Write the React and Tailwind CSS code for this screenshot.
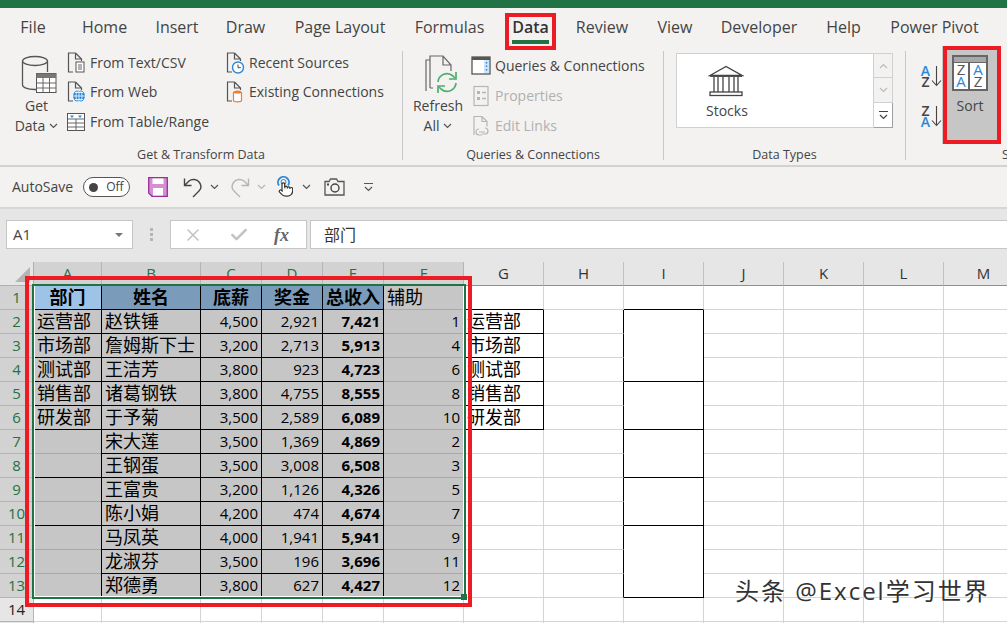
import { Check, X } from "lucide-react";

const uiFont = "font-['Open_Sans','Noto_Sans_CJK_SC',sans-serif]";

const tabs = [
  ["File", "w-[62px]"],
  ["Home", "w-[81px]"],
  ["Insert", "w-[64px]"],
  ["Draw", "w-[73px]"],
  ["Page Layout", "w-[116px]"],
  ["Formulas", "w-[103px]"],
  ["Data", "w-[59px]"],
  ["Review", "w-[84px]"],
  ["View", "w-[62px]"],
  ["Developer", "w-[106px]"],
  ["Help", "w-[63px]"],
  ["Power Pivot", "w-[119px]"],
];

const colLetters = ["A", "B", "C", "D", "E", "F", "G", "H", "I", "J", "K", "L", "M"];

const rows = [
  ["运营部", "赵铁锤", "4,500", "2,921", "7,421", "1", "运营部"],
  ["市场部", "詹姆斯下士", "3,200", "2,713", "5,913", "4", "市场部"],
  ["测试部", "王洁芳", "3,800", "923", "4,723", "6", "测试部"],
  ["销售部", "诸葛钢铁", "3,800", "4,755", "8,555", "8", "销售部"],
  ["研发部", "于予菊", "3,500", "2,589", "6,089", "10", "研发部"],
  ["", "宋大莲", "3,500", "1,369", "4,869", "2", ""],
  ["", "王钢蛋", "3,500", "3,008", "6,508", "3", ""],
  ["", "王富贵", "3,200", "1,126", "4,326", "5", ""],
  ["", "陈小娟", "4,200", "474", "4,674", "7", ""],
  ["", "马凤英", "4,000", "1,941", "5,941", "9", ""],
  ["", "龙淑芬", "3,500", "196", "3,696", "11", ""],
  ["", "郑德勇", "3,800", "627", "4,427", "12", ""],
];

// rows (1-based sheet numbers) where column A / I has a black line under it
const blockEnds = [1, 2, 3, 4, 5, 6, 8, 10, 13];
const mergedEnds = [4, 6, 8, 10, 13];

const Chevron = ({ color = "#555" }) => (
  <svg width="9" height="6" viewBox="0 0 9 6" className="shrink-0">
    <path d="M1 1l3.5 3.5L8 1" fill="none" stroke={color} strokeWidth="1.2" />
  </svg>
);

const GetDataIcon = () => (
  <svg width="36" height="38" viewBox="0 0 36 38" className="ml-[5px]">
    <path d="M1.5 6v24c0 2.5 5 4.5 12 4.5h2M26.5 6v11" fill="none" stroke="#555" strokeWidth="1.3" />
    <ellipse cx="14" cy="6" rx="12.5" ry="4.5" fill="#f3f2f1" stroke="#555" strokeWidth="1.3" />
    <rect x="15.5" y="18.5" width="19.5" height="19" fill="#fff" stroke="#555" />
    <rect x="15.5" y="18.5" width="19.5" height="4.5" fill="#777" />
    <path d="M22 23v14M28.5 23v14M16 28h19M16 33h19" stroke="#666" />
  </svg>
);

const Doc = ({ children, color = "#555" }) => (
  <svg width="20" height="22" viewBox="0 0 20 22" className="shrink-0">
    <path d="M9.5 1H2.5v19H7M9.5 1l6 6v2M9.5 1v6h6" fill="none" stroke={color} strokeWidth="1.2" />
    {children}
  </svg>
);

const TextDocIcon = () => (
  <Doc>
    <rect x="10" y="10" width="8" height="10" fill="#fff" stroke="#555" />
    <path d="M12 13h4M12 15h4M12 17h4" stroke="#666" />
  </Doc>
);

const WebDocIcon = () => (
  <Doc>
    <circle cx="13" cy="15" r="6" fill="#2b88d8" />
    <path d="M7 15h12M13 9v12M9 11.5h8M9 18.5h8" stroke="#fff" strokeWidth="0.8" />
    <ellipse cx="13" cy="15" rx="3" ry="6" fill="none" stroke="#fff" strokeWidth="0.8" />
  </Doc>
);

const RecentIcon = () => (
  <Doc>
    <circle cx="13" cy="15.5" r="5.5" fill="#fff" stroke="#2b88d8" strokeWidth="1.4" />
    <path d="M13 12.5v3.2h2.8" fill="none" stroke="#444" />
  </Doc>
);

const ExistingIcon = () => (
  <Doc>
    <path d="M8.5 11v8.5c0 .8 2 1.3 4 1.3s4-.5 4-1.3V11" fill="#fff" stroke="#ed7d31" strokeWidth="1.2" />
    <ellipse cx="12.5" cy="11" rx="4" ry="1.6" fill="#ed7d31" />
  </Doc>
);

const TableIcon = () => (
  <svg width="20" height="20" viewBox="0 0 20 20" className="shrink-0">
    <rect x="1.5" y="1.5" width="17" height="17" fill="#fff" stroke="#555" />
    <path d="M2 7h17M2 11h17M2 15h17M10 7v12" stroke="#666" />
    <path d="M4 3.5h4L6 6zM12 3.5h4L14 6z" fill="#2b88d8" />
  </svg>
);

const RefreshIcon = () => (
  <svg width="38" height="40" viewBox="0 0 38 40" className="ml-[8px]">
    <path d="M3 36V5h4" fill="none" stroke="#666" strokeWidth="1.2" />
    <path d="M7 33V1h13l8 9v6M20 1v9h8M7 33h3" fill="none" stroke="#666" strokeWidth="1.2" />
    <path d="M15 27a9 9 0 0 1 15-6l2 2M33 28a9 9 0 0 1-15 6l-2-2" fill="none" stroke="#4caf6e" strokeWidth="1.7" />
    <path d="M33 17v7h-7M15 38v-7h7" fill="none" stroke="#4caf6e" strokeWidth="1.7" />
  </svg>
);

const QueriesIcon = () => (
  <svg width="20" height="19" viewBox="0 0 20 19" className="shrink-0">
    <rect x="1" y="1" width="18" height="17" fill="#fff" stroke="#555" strokeWidth="1.3" />
    <rect x="1" y="1" width="18" height="3" fill="#555" />
    <rect x="13" y="4" width="5" height="13" fill="#cfe4f6" />
    <path d="M15.5 6v1.5M15.5 9.5v1.5M15.5 13v1.5" stroke="#2b88d8" strokeWidth="1.5" />
  </svg>
);

const PropertiesIcon = () => (
  <svg width="20" height="22" viewBox="0 0 20 22" className="shrink-0">
    <rect x="3" y="1.5" width="14" height="19" fill="none" stroke="#b5b5b5" strokeWidth="1.2" />
    <path d="M6 6h3v3H6zM6 12h3v3H6z" fill="#b5b5b5" />
    <path d="M11 7.5h4M11 13.5h4" stroke="#b5b5b5" strokeWidth="1.4" />
  </svg>
);

const EditLinksIcon = () => (
  <svg width="20" height="22" viewBox="0 0 20 22" className="shrink-0">
    <path d="M3 20V1.5h8l5 5v5M11 1.5v5h5" fill="none" stroke="#b5b5b5" strokeWidth="1.2" />
    <path d="M8 14a3 3 0 1 0 0 6h3M14 13a3 3 0 1 1 0 6h-3M8 17h6" fill="none" stroke="#b5b5b5" strokeWidth="1.2" />
  </svg>
);

const BankIcon = () => (
  <svg width="36" height="32" viewBox="0 0 36 32">
    <path d="M2 10.5L18 1.5l16 9z" fill="none" stroke="#444" strokeWidth="1.4" />
    <path d="M2 11h32" stroke="#444" strokeWidth="1.8" />
    <path d="M6 12v15M10 12v15M15 12v15M21 12v15M26 12v15M30 12v15" stroke="#444" strokeWidth="1.3" />
    <rect x="2" y="27" width="32" height="3.5" fill="none" stroke="#444" strokeWidth="1.3" />
  </svg>
);

const SortSmall = ({ top, bottom, topClass, bottomClass }) => (
  <div className="flex h-[22px] w-[22px] items-stretch">
    <div className="flex w-[11px] flex-col items-center text-[14px] leading-[11px] font-semibold">
      <span className={topClass}>{top}</span>
      <span className={bottomClass}>{bottom}</span>
    </div>
    <svg width="11" height="22" viewBox="0 0 11 22">
      <path d="M5.500 1v19M1 15.500l4.500 5 4.500-5" fill="none" stroke="#444" strokeWidth="1.1" />
    </svg>
  </div>
);

const SortIcon = () => (
  <div className="grid h-[36px] w-[36px] grid-cols-2 grid-rows-[6px_1fr] border-2 border-[#666] bg-white">
    <div className="col-span-2 border-b border-[#666] bg-[#a8a8a8]" />
    <div className="flex flex-col items-center border-r-2 border-[#666] text-[15px] leading-[12px]">
      <span className="text-[#555]">Z</span>
      <span className="text-[#2b88d8]">A</span>
    </div>
    <div className="flex flex-col items-center text-[15px] leading-[12px]">
      <span className="text-[#2b88d8]">A</span>
      <span className="text-[#555]">Z</span>
    </div>
  </div>
);

const SaveIcon = () => (
  <svg width="20" height="20" viewBox="0 0 20 20">
    <path d="M.7.7h18.6v18.6H4L.7 16z" fill="#d58fd5" stroke="#9a2f9a" strokeWidth="1.3" />
    <rect x="4.5" y="1.5" width="11" height="5.5" fill="#fff" />
    <rect x="5" y="11" width="10" height="7.5" fill="#fff" />
  </svg>
);

const UndoIcon = ({ color }) => (
  <svg width="20" height="22" viewBox="0 0 20 22">
    <path d="M1.5 2.5v7h7M2 9l4-4c3-2.500 8-2 10.500 1.500 2 3 1.500 6.500-.500 8.500L10 21" fill="none" stroke={color} strokeWidth="1.4" />
  </svg>
);

const TouchIcon = () => (
  <svg width="16" height="22" viewBox="0 0 16 22">
    <path d="M2 9.500a5.500 5.500 0 1 1 9 0" fill="none" stroke="#2b88d8" strokeWidth="1.8" />
    <circle cx="6.500" cy="6" r="2.500" fill="none" stroke="#2b88d8" strokeWidth="1" />
    <svg x="1" y="5" width="16" height="17" viewBox="0 0 24 24" fill="#fff" stroke="#333" strokeWidth="1.8">
      <path d="M18 11v-1a2 2 0 0 0-2-2a2 2 0 0 0-2 2" />
      <path d="M14 10V9a2 2 0 0 0-2-2a2 2 0 0 0-2 2v1" />
      <path d="M10 9.500V4a2 2 0 0 0-2-2a2 2 0 0 0-2 2v10" />
      <path d="M18 11a2 2 0 1 1 4 0v3a8 8 0 0 1-8 8h-2c-2.800 0-4.500-.860-5.990-2.340l-3.600-3.600a2 2 0 0 1 2.830-2.820L7 15" />
    </svg>
  </svg>
);

const CameraIcon = () => (
  <svg width="21" height="18" viewBox="0 0 21 18">
    <path d="M1 3.500h4l1.500-2.500h6L14 3.500h6V17H1z" fill="none" stroke="#555" strokeWidth="1.3" />
    <circle cx="11" cy="10" r="4" fill="none" stroke="#444" strokeWidth="1.4" />
    <rect x="3" y="5.500" width="2" height="2" fill="#444" />
  </svg>
);

const SmallAction = ({ icon, label, disabled }) => (
  <div className="flex h-[29.5px] items-center">
    <div className="flex w-[24px] shrink-0 justify-start">{icon}</div>
    <span className={disabled ? "text-[14px] leading-none text-[#b0b0b0]" : "text-[14px] leading-none text-[#444]"}>
      {label}
    </span>
  </div>
);

const GroupLabel = ({ children }) => (
  <div className="flex h-[18px] shrink-0 items-center justify-center text-[12.5px] leading-none text-[#444]">{children}</div>
);

const SheetCell = ({ row, col }) => {
  const left = "flex items-center justify-start overflow-hidden whitespace-nowrap pl-[3px] text-[18px] text-black";
  const right = "flex items-center justify-end pr-[3px] text-[15px] text-black";
  const data = row >= 2 && row <= 13 ? rows[row - 2] : null;

  // selected table, A to F
  if (row === 1 && col === 0)
    return <div className="flex items-center justify-center border-r border-b border-black bg-[#9dc3e6] text-[18px] font-bold text-black">部门</div>;
  if (row === 1 && col >= 1 && col <= 4)
    return (
      <div className="flex items-center justify-center border-r border-b border-black bg-[#7a9cba] text-[18px] font-bold text-black">
        {["", "姓名", "底薪", "奖金", "总收入"][col]}
      </div>
    );
  if (row === 1 && col === 5)
    return <div className={`${left} border-b border-[#a9a9a9] bg-[#c6c6c6]`}>辅助</div>;
  if (data && col === 0)
    return (
      <div className={`${left} border-r border-black bg-[#c6c6c6] ${blockEnds.includes(row) ? "border-b" : "border-b-0 shadow-[inset_0_-1px_0_#a9a9a9]"}`}>
        {data[0]}
      </div>
    );
  if (data && col === 1)
    return <div className={`${left} border-r border-b border-black bg-[#c6c6c6]`}>{data[1]}</div>;
  if (data && (col === 2 || col === 3))
    return <div className={`${right} border-r border-b border-black bg-[#c6c6c6]`}>{data[col]}</div>;
  if (data && col === 4)
    return <div className={`${right} border-r border-b border-black bg-[#c6c6c6] font-bold`}>{data[4]}</div>;
  if (data && col === 5)
    return <div className={`${right} border-b border-[#a9a9a9] bg-[#c6c6c6] pr-[4px]`}>{data[5]}</div>;

  // helper list in G
  if (row >= 2 && row <= 6 && col === 6)
    return <div className={`${left} border-r border-b border-black bg-white`}>{data[6]}</div>;
  if (row === 1 && (col === 6 || col === 8))
    return <div className="border-r border-b border-r-[#d4d4d4] border-b-black bg-white" />;

  // merged boxes in I
  if (row >= 2 && row <= 13 && col === 7)
    return <div className="border-r border-b border-r-black border-b-[#d4d4d4] bg-white" />;
  if (row >= 2 && row <= 13 && col === 8)
    return <div className={mergedEnds.includes(row) ? "border-r border-b border-black bg-white" : "border-r border-black bg-white"} />;

  return <div className="border-r border-b border-[#d4d4d4] bg-white" />;
};

export default function App() {
  return (
    <div className={`relative h-[623px] w-[1007px] overflow-hidden bg-white ${uiFont}`}>
      <div className="h-2 bg-[#217346]" />

      {/* tabs */}
      <div className="flex h-[42px] items-start bg-[#f3f2f1] pl-[2px]">
        {tabs.map(([name, width]) =>
          name === "Data" ? (
            <div key={name} className={`relative flex h-[42px] flex-col items-center ${width}`}>
              <span className="mt-[8px] text-[16px] leading-[22px] font-semibold text-[#333]">{name}</span>
              <div className="absolute top-[32px] h-1 w-[37px] bg-[#217346]" />
            </div>
          ) : (
            <span key={name} className={`mt-[8px] text-center text-[16px] leading-[22px] text-[#444] ${width}`}>
              {name}
            </span>
          )
        )}
      </div>

      {/* ribbon */}
      <div className="flex h-[117px] border-b-2 border-[#d2d2d2] bg-[#f3f2f1] pt-[1px]">
        <div className="flex h-[109px] w-[403px] shrink-0 flex-col border-r border-[#c8c8c8]">
          <div className="flex h-[95px] shrink-0 pl-[7px]">
            <div className="flex w-[59px] shrink-0 flex-col items-center pt-[4px] text-[14px] leading-[20px] text-[#444]">
              <GetDataIcon />
              <span className="mt-[3px]">Get</span>
              <span className="flex items-center gap-[4px]">Data <Chevron /></span>
            </div>
            <div className="-mt-[3px] w-[159px] shrink-0">
              <SmallAction icon={<TextDocIcon />} label="From Text/CSV" />
              <SmallAction icon={<WebDocIcon />} label="From Web" />
              <SmallAction icon={<TableIcon />} label="From Table/Range" />
            </div>
            <div className="-mt-[3px]">
              <SmallAction icon={<RecentIcon />} label="Recent Sources" />
              <SmallAction icon={<ExistingIcon />} label="Existing Connections" />
            </div>
          </div>
          <GroupLabel>Get &amp; Transform Data</GroupLabel>
        </div>

        <div className="flex h-[109px] w-[261px] shrink-0 flex-col border-r border-[#c8c8c8]">
          <div className="flex h-[95px] shrink-0">
            <div className="flex w-[67px] shrink-0 flex-col items-center pt-[4px] pl-[3px] text-[14px] leading-[20px] text-[#444]">
              <RefreshIcon />
              <span className="mt-[1px]">Refresh</span>
              <span className="flex items-center gap-[4px]">All <Chevron /></span>
            </div>
            <div className="flex flex-col gap-[0.5px] pl-[1px]">
              <SmallAction icon={<QueriesIcon />} label="Queries & Connections" />
              <SmallAction icon={<PropertiesIcon />} label="Properties" disabled />
              <SmallAction icon={<EditLinksIcon />} label="Edit Links" disabled />
            </div>
          </div>
          <GroupLabel>Queries &amp; Connections</GroupLabel>
        </div>

        <div className="flex h-[109px] w-[242px] shrink-0 flex-col border-r border-[#c8c8c8]">
          <div className="flex h-[95px] shrink-0 items-start pt-[2px] pl-[12px]">
            <div className="flex h-[75px] w-[198px] flex-col border border-[#d0d0d0] bg-white pt-[11px] pl-[31px]">
              <BankIcon />
              <span className="mt-[5px] -ml-[2px] text-[14px] leading-[18px] text-[#444]">Stocks</span>
            </div>
            <div className="flex h-[75px] w-[19px] flex-col">
              <div className="flex h-[25px] items-center justify-center border border-l-0 border-[#d0d0d0]"><svg width="9" height="6" viewBox="0 0 9 6"><path d="M1 5l3.500-3.500L8 5" fill="none" stroke="#bbb" strokeWidth="1.200" /></svg></div>
              <div className="flex h-[25px] items-center justify-center border-r border-b border-[#d0d0d0]"><Chevron color="#bbb" /></div>
              <div className="flex h-[25px] flex-col items-center justify-center gap-[2px] border-r border-b border-[#a0a0a0] bg-white">
                <div className="h-px w-[9px] bg-[#444]" />
                <Chevron color="#444" />
              </div>
            </div>
          </div>
          <GroupLabel>Data Types</GroupLabel>
        </div>

        <div className="flex h-[109px] flex-1 flex-col">
          <div className="flex h-[95px] shrink-0 pl-[14px]">
            <div className="flex w-[22px] shrink-0 flex-col gap-[18px] pt-[14px]">
              <SortSmall top="A" bottom="Z" topClass="text-[#2b88d8]" bottomClass="text-[#444]" />
              <SortSmall top="Z" bottom="A" topClass="text-[#444]" bottomClass="text-[#2b88d8]" />
            </div>
            <div className="-mt-[5px] flex h-[98px] w-[56px] shrink-0 flex-col items-center bg-[#c6c6c6] pt-[9px]">
              <SortIcon />
              <span className="mt-[5px] text-[14px] leading-[20px] text-[#444]">Sort</span>
            </div>
          </div>
          <div className="shrink-0 whitespace-nowrap pl-[96px] text-[12.5px] leading-[18px] text-[#444]">Sort &amp; Filter</div>
        </div>
      </div>

      {/* quick access toolbar */}
      <div className="flex h-[42px] items-center border-b-2 border-[#d6d6d6] bg-[#f3f2f1] pl-[12px] text-[#444]">
        <span className="text-[14px] leading-none">AutoSave</span>
        <div className="ml-[10px] flex h-[20px] w-[47px] items-center rounded-full border border-[#555] bg-white pl-[5px]">
          <div className="h-[9px] w-[9px] rounded-full bg-[#444]" />
          <span className="ml-[8px] text-[12px] leading-none">Off</span>
        </div>
        <div className="ml-[18px]"><SaveIcon /></div>
        <div className="ml-[15px]"><UndoIcon color="#444" /></div>
        <div className="ml-[7px]"><Chevron /></div>
        <div className="ml-[11px] -scale-x-100"><UndoIcon color="#b5b5b5" /></div>
        <div className="ml-[7px]"><Chevron color="#b5b5b5" /></div>
        <div className="ml-[11px]"><TouchIcon /></div>
        <div className="ml-[9px]"><Chevron /></div>
        <div className="ml-[13px]"><CameraIcon /></div>
        <div className="ml-[19px] flex flex-col items-center gap-[2px]">
          <div className="h-px w-[9px] bg-[#555]" />
          <Chevron />
        </div>
      </div>

      {/* formula bar */}
      <div className="flex h-[53px] items-start bg-[#e6e6e6] pt-[11px] pl-[6px]">
        <div className="flex h-[29px] w-[127px] items-center justify-between border border-[#c6c6c6] bg-white pr-[9px] pl-[6px]">
          <span className="text-[15px] leading-none text-[#444]">A1</span>
          <div className="h-0 w-0 border-x-[4px] border-t-[4px] border-x-transparent border-t-[#777]" />
        </div>
        <div className="ml-[16px] flex h-[29px] w-[5px] flex-col items-center justify-center gap-[2px]">
          <div className="h-[3px] w-[3px] bg-[#b5b5b5]" />
          <div className="h-[3px] w-[3px] bg-[#b5b5b5]" />
          <div className="h-[3px] w-[3px] bg-[#b5b5b5]" />
        </div>
        <div className="ml-[16px] flex h-[29px] w-[137px] items-center border border-[#c6c6c6] bg-white pl-[12px]">
          <X size={20} strokeWidth={2} className="text-[#c4c4c4]" />
          <Check size={20} strokeWidth={3} className="ml-[26px] text-[#c4c4c4]" />
          <span className="ml-[25px] font-['Liberation_Serif',serif] text-[18px] leading-none font-bold text-[#666] italic">fx</span>
        </div>
        <div className="ml-[3px] flex h-[29px] flex-1 items-center border border-r-0 border-[#c6c6c6] bg-white pl-[13px] text-[16px] leading-none text-[#333]">
          部门
        </div>
      </div>

      {/* sheet */}
      <div className="grid grid-cols-[34px_68px_99px_61px_61px_61px_80px_80px_80px_80px_80px_80px_80px_80px] grid-rows-[24px_repeat(15,24px)]">
        <div className="relative border-r border-b border-[#b0b0b0] bg-[#e6e6e6]">
          <div className="absolute right-[3px] bottom-[3px] h-0 w-0 border-b-[15px] border-l-[15px] border-b-[#b4b4b4] border-l-transparent" />
        </div>
        {colLetters.map((letter, i) =>
          i < 6 ? (
            <div key={letter} className="flex items-center justify-center border-r border-b border-r-[#b5b5b5] border-b-[#909090] bg-[#d2d2d2] text-[15px] text-[#217346]">
              {letter}
            </div>
          ) : (
            <div key={letter} className="flex items-center justify-center border-r border-b border-r-[#c0c0c0] border-b-[#909090] bg-[#e6e6e6] text-[15px] text-[#333]">
              {letter}
            </div>
          )
        )}
        {Array.from({ length: 15 }, (_, r) => r + 1).map((row) => (
          <div key={row} className="contents">
            {row <= 13 ? (
              <div className="flex items-center justify-center border-r border-b border-[#b5b5b5] bg-[#d2d2d2] text-[15px] text-[#217346]">{row}</div>
            ) : (
              <div className="flex items-center justify-center border-r border-b border-[#b5b5b5] bg-[#e6e6e6] text-[15px] text-[#222]">{row === 14 ? row : ""}</div>
            )}
            {colLetters.map((letter, col) => (
              <SheetCell key={letter} row={row} col={col} />
            ))}
          </div>
        ))}
      </div>

      {/* selection */}
      <div className="absolute top-[284px] left-[32px] h-[315px] w-[434px] border-2 border-[#217346]">
        <div className="absolute inset-0 border-x border-b border-white" />
      </div>
      <div className="absolute top-[594px] left-[461px] h-[6px] w-[6px] bg-[#217346]" />

      {/* red annotations */}
      <div className="absolute top-[276px] left-[25px] h-[331px] w-[447px] border-4 border-[#ed1c24]" />
      <div className="absolute top-[13px] left-[505px] h-[37px] w-[51px] border-4 border-[#ed1c24]" />
      <div className="absolute top-[46px] left-[943px] h-[98px] w-[58px] border-4 border-[#ed1c24]" />

      {/* watermark */}
      <div className="absolute top-[574px] left-[735px] text-[24px] leading-[34px] tracking-[2px] whitespace-nowrap text-[#333] [text-shadow:1px_1px_0_#fff]">
        头条 @Excel学习世界
      </div>
    </div>
  );
}
